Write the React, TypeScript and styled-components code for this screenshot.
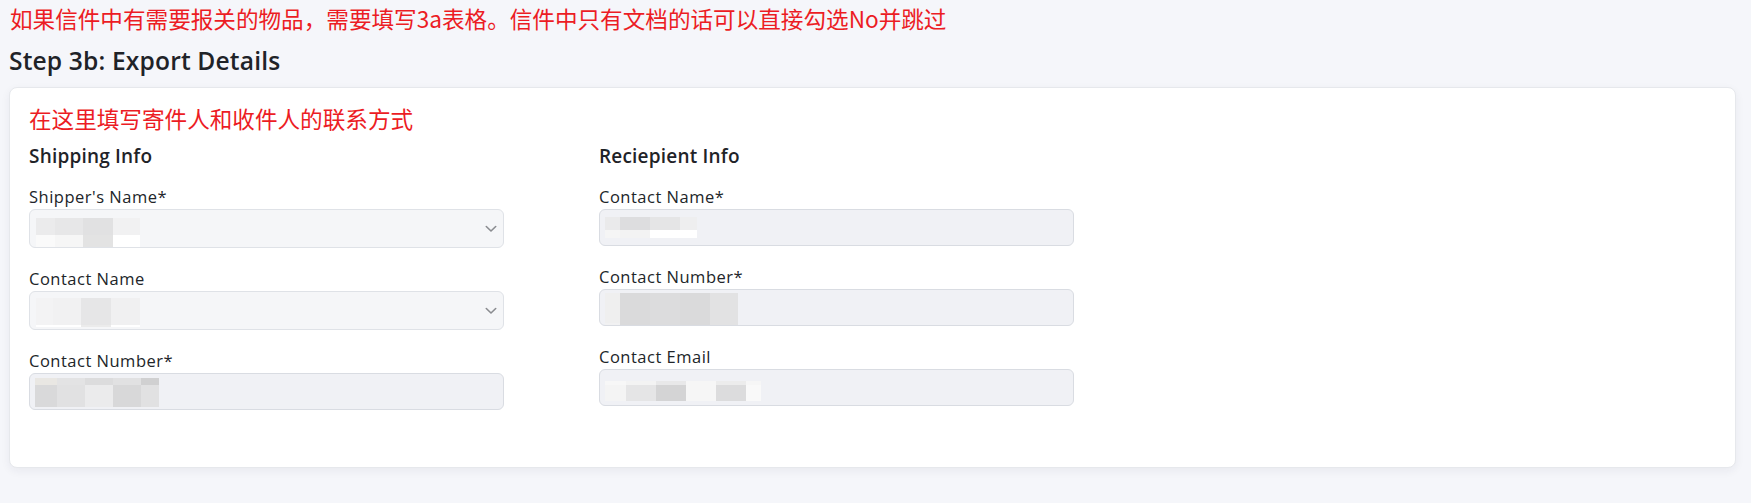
import React from "react";
import styled, { createGlobalStyle } from "styled-components";

const GlobalStyle = createGlobalStyle`
  html, body {
    margin: 0;
    padding: 0;
    background: #f5f6fa;
  }
  body {
    font-family: "Open Sans", "Noto Sans", sans-serif;
    color: #212529;
  }
  * { box-sizing: border-box; }
`;

const Page = styled.div`
  padding: 0 15px 30px 9px;
`;

const Annotation = styled.div<{ $size: number }>`
  font-family: "Noto Sans CJK SC", "Noto Sans", sans-serif;
  color: #ec1c24;
  font-size: ${(p) => p.$size}px;
  line-height: 1.5;
  white-space: nowrap;
`;

const TopNote = styled(Annotation)`
  padding-left: 1px;
  height: 38px;
  line-height: 38px;
`;

const Title = styled.h2`
  margin: 7px 0 10px 0;
  font-family: "Open Sans", sans-serif;
  font-weight: 600;
  font-size: 24.6px;
  line-height: 32px;
  letter-spacing: 0.15px;
  color: #1f2328;
`;

const Card = styled.section`
  background: #ffffff;
  border: 1px solid #e6e8ec;
  border-radius: 8px;
  box-shadow: 0 3px 10px rgba(30, 40, 70, 0.06);
  padding: 14px 20px 57px 19px;
`;

const CardNote = styled(Annotation)`
  line-height: 34px;
  margin-bottom: 8px;
`;

const Columns = styled.div`
  display: grid;
  grid-template-columns: 475px 475px;
  column-gap: 95px;
`;

const Column = styled.div`
  display: flex;
  flex-direction: column;
`;

const SectionTitle = styled.h3`
  margin: 0 0 17px 0;
  font-family: "Open Sans", sans-serif;
  font-weight: 600;
  font-size: 19px;
  line-height: 24px;
  letter-spacing: 0.2px;
  color: #1f2328;
`;

const Field = styled.div`
  display: flex;
  flex-direction: column;
  margin-bottom: 19px;
  &:last-child { margin-bottom: 0; }
`;

const Label = styled.label`
  font-family: "Open Sans", sans-serif;
  font-size: 16.5px;
  line-height: 24px;
  letter-spacing: 0.5px;
  color: #212529;
`;

const Box = styled.div<{ $select?: boolean }>`
  display: flex;
  align-items: center;
  justify-content: space-between;
  height: ${(p) => (p.$select ? 39 : 37)}px;
  border: 1px solid ${(p) => (p.$select ? "#dfe2e7" : "#d9dce2")};
  border-radius: 6px;
  background: ${(p) => (p.$select ? "#f5f6f8" : "#f0f1f5")};
  padding: 0 5px 0 ${(p) => (p.$select ? 6 : 5)}px;
`;

const Blur = styled.div`
  display: flex;
  align-self: stretch;
`;

const BlurCol = styled.div<{ $w: number }>`
  display: flex;
  flex-direction: column;
  width: ${(p) => p.$w}px;
`;

const BlurCell = styled.div<{ $h: number; $c: string }>`
  height: ${(p) => p.$h}px;
  background: ${(p) => p.$c};
`;

const Chevron = styled.svg`
  width: 12px;
  height: 8px;
  flex: none;
  margin-right: 1px;
`;

type Cell = [number, string, string];

const Redacted: React.FC<{ top: number; bottom: number; offset?: number; cells: Cell[] }> = ({
  top,
  bottom,
  offset = 7,
  cells,
}) => (
  <Blur style={{ paddingTop: offset }}>
    {cells.map(([w, a, b], i) => (
      <BlurCol key={i} $w={w}>
        <BlurCell $h={top} $c={a} />
        <BlurCell $h={bottom} $c={b} />
      </BlurCol>
    ))}
  </Blur>
);

const ChevronIcon = () => (
  <Chevron viewBox="0 0 12 8">
    <path d="M1.3 1.5 L6 6 L10.7 1.5" fill="none" stroke="#8a8c90" strokeWidth="1.6" strokeLinecap="round" strokeLinejoin="round" />
  </Chevron>
);

type FieldProps = { label: string; cells: Cell[]; top: number; bottom: number; offset?: number };

const SelectField: React.FC<FieldProps> = ({ label, ...r }) => (
  <Field>
    <Label>{label}</Label>
    <Box $select>
      <Redacted {...r} />
      <ChevronIcon />
    </Box>
  </Field>
);

const InputField: React.FC<FieldProps> = ({ label, ...r }) => (
  <Field>
    <Label>{label}</Label>
    <Box>
      <Redacted {...r} />
    </Box>
  </Field>
);

export default function App() {
  return (
    <>
      <GlobalStyle />
      <Page>
        <TopNote $size={22.6}>
          如果信件中有需要报关的物品，需要填写3a表格。信件中只有文档的话可以直接勾选No并跳过
        </TopNote>
        <Title>Step 3b: Export Details</Title>
        <Card>
          <CardNote $size={22.6}>在这里填写寄件人和收件人的联系方式</CardNote>
          <Columns>
            <Column>
              <SectionTitle>Shipping Info</SectionTitle>
              <SelectField
                label="Shipper's Name*"
                offset={8}
                top={17}
                bottom={12}
                cells={[
                  [19, "#ebebec", "#fafafa"],
                  [28, "#e7e7e8", "#f6f6f6"],
                  [30, "#e1e1e2", "#e3e3e3"],
                  [27, "#f1f1f2", "#ffffff"],
                ]}
              />
              <SelectField
                label="Contact Name"
                offset={6}
                top={27}
                bottom={2}
                cells={[
                  [17, "#f3f3f4", "#ffffff"],
                  [28, "#f1f1f2", "#ffffff"],
                  [30, "#e6e6e7", "#ebebeb"],
                  [29, "#f0f0f1", "#ffffff"],
                ]}
              />
              <InputField
                label="Contact Number*"
                offset={4}
                top={7}
                bottom={22}
                cells={[
                  [22, "#e9e7e3", "#d9d9da"],
                  [28, "#e3e3e4", "#e1e1e2"],
                  [28, "#dcdcdd", "#ebebec"],
                  [28, "#e1e1e2", "#d8d8d9"],
                  [18, "#d0d0d1", "#e1e1e2"],
                ]}
              />
            </Column>
            <Column>
              <SectionTitle>Reciepient Info</SectionTitle>
              <InputField
                label="Contact Name*"
                offset={7}
                top={13}
                bottom={8}
                cells={[
                  [15, "#eaeaeb", "#f5f5f5"],
                  [30, "#dddddf", "#f3f3f3"],
                  [30, "#e5e5e6", "#ffffff"],
                  [17, "#eeeeef", "#ffffff"],
                ]}
              />
              <InputField
                label="Contact Number*"
                offset={3}
                top={30}
                bottom={2}
                cells={[
                  [15, "#efefef", "#f1f1f2"],
                  [30, "#dadadb", "#dadadb"],
                  [30, "#dcdcdd", "#dcdcdd"],
                  [30, "#dadadb", "#dadadb"],
                  [28, "#e2e2e3", "#e2e2e3"],
                ]}
              />
              <InputField
                label="Contact Email"
                offset={11}
                top={4}
                bottom={16}
                cells={[
                  [21, "#f7f7f7", "#f4f4f4"],
                  [30, "#f3f3f3", "#e5e5e6"],
                  [30, "#e8e8e9", "#d4d4d5"],
                  [30, "#f6f6f6", "#f6f6f6"],
                  [30, "#ececec", "#dcdcdd"],
                  [15, "#f6f6f6", "#f9f9f9"],
                ]}
              />
            </Column>
          </Columns>
        </Card>
      </Page>
    </>
  );
}
